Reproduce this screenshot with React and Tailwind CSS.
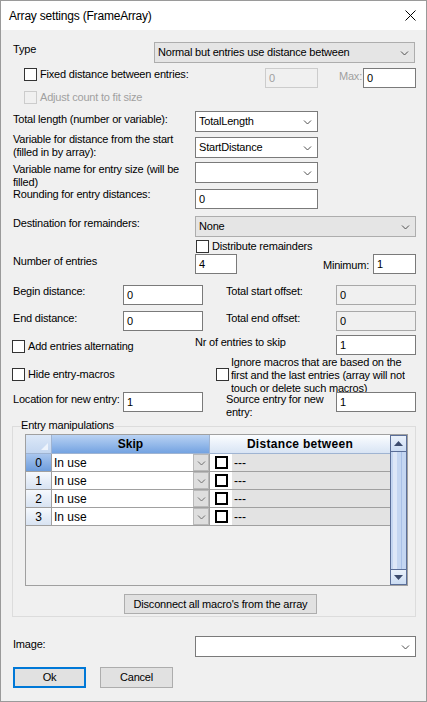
import React from "react";

const Chev = ({ className = "" }) => (
  <svg width="9" height="6" viewBox="0 0 9 6" className={className}>
    <path d="M1 1.5 L4.5 5 L8 1.5" fill="none" stroke="currentColor" strokeWidth="1" />
  </svg>
);

function Combo({ className = "", value = "", gray = false }) {
  return (
    <div
      className={`${className} h-[21px] shrink-0 flex items-center border pl-[3px] pr-[5px] ${
        gray ? "bg-[#e5e5e5] border-[#adadad]" : "bg-white border-[#7a7a7a]"
      }`}
    >
      <span className="flex-1 whitespace-nowrap overflow-hidden">{value}</span>
      <Chev className="text-[#505050]" />
    </div>
  );
}

function TB({ className = "", value = "", variant = "normal" }) {
  const v =
    variant === "disabled"
      ? "bg-[#f0f0f0] border-[#cccccc] text-[#a0a0a0]"
      : variant === "readonly"
      ? "bg-[#f0f0f0] border-[#a8a8a8]"
      : "bg-white border-[#7a7a7a]";
  return (
    <div className={`${className} h-[20px] shrink-0 flex items-center border pl-[3px] ${v}`}>
      {value}
    </div>
  );
}

const CB = ({ disabled = false }) => (
  <span
    className={`block w-[13px] h-[13px] border shrink-0 ${
      disabled ? "border-[#cccccc] bg-[#f0f0f0]" : "border-[#333333] bg-white"
    }`}
  />
);

const Row = ({ className = "", children }) => (
  <div className={`flex items-start shrink-0 ${className}`}>{children}</div>
);

function Grid() {
  return (
    <div className="mt-[7px] ml-[12px] w-[383px] h-[152px] border border-[#a0a0a0] flex bg-[#f0f0f0] font-['Liberation_Sans',Arial,sans-serif] text-[12px] leading-[14px] tracking-normal">
      <div className="w-[364px] flex flex-col">
        <div className="flex h-[19px] border-b border-[#9fb4d2]">
          <div className="w-[26px] border-r border-[#9fb4d2] bg-linear-to-b from-[#dce8f8] to-[#c3d6f0] flex items-end justify-end pr-[3px] pb-[3px]">
            <svg width="7" height="7" viewBox="0 0 7 7">
              <path d="M7 0 L7 7 L0 7 Z" fill="#eef4fc" />
            </svg>
          </div>
          <div className="w-[158px] border-r border-[#9fb4d2] bg-linear-to-b from-[#b9d2f3] to-[#74a3e1] flex items-center justify-center font-bold">
            Skip
          </div>
          <div className="w-[180px] bg-linear-to-b from-[#fbfdff] to-[#d8e4f4] flex items-center justify-center font-bold tracking-[0.3px]">
            Distance between
          </div>
        </div>
        {[0, 1, 2, 3].map((i) => (
          <div key={i} className="flex h-[18px] border-b border-[#a0a0a0]">
            <div
              className={`w-[26px] border-r border-[#a0a0a0] flex items-center justify-center ${
                i === 0
                  ? "bg-linear-to-b from-[#a9c6ee] to-[#6e9ddc]"
                  : "bg-linear-to-b from-[#f6f9fd] to-[#d8e3f2]"
              }`}
            >
              {i}
            </div>
            <div className="w-[158px] border-r border-[#a0a0a0] bg-white flex items-center pl-[2px]">
              <span className="flex-1">In use</span>
              <div className="w-[16px] h-full bg-[#dedede] border border-[#b9b9b9] flex items-center justify-center text-[#707070]">
                <Chev />
              </div>
            </div>
            <div className="w-[22px] bg-white flex items-center justify-center">
              <span className="block w-[13px] h-[13px] border-2 border-black" />
            </div>
            <div className="w-[158px] bg-[#e3e3e3] pl-[2px] flex items-center">---</div>
          </div>
        ))}
      </div>
      <div className="w-[17px] flex flex-col">
        <div className="h-[17px] border border-[#5a6e98] bg-linear-to-b from-[#eaf1fb] to-[#cbdcf3] flex items-center justify-center">
          <svg width="9" height="5" viewBox="0 0 9 5">
            <path d="M0 5 L4.5 0 L9 5 Z" fill="#3b4b6e" />
          </svg>
        </div>
        <div className="flex-1 border-x border-[#5a6e98] bg-[#c4d6f1] flex">
          <div className="ml-[2px] w-[4px] bg-[#dde7f7]" />
          <div className="ml-[4px] w-[1px] bg-[#a9c0e6]" />
        </div>
        <div className="h-[16px] border border-[#5a6e98] bg-linear-to-b from-[#eaf1fb] to-[#cbdcf3] flex items-center justify-center">
          <svg width="9" height="5" viewBox="0 0 9 5">
            <path d="M0 0 L4.5 5 L9 0 Z" fill="#3b4b6e" />
          </svg>
        </div>
      </div>
    </div>
  );
}

export default function App() {
  return (
    <div className="w-[427px] h-[702px] border border-[#9a9a9a] bg-[#f0f0f0] flex flex-col overflow-hidden text-black text-[11px] leading-[13px] tracking-[-0.2px] font-['Liberation_Sans',Arial,sans-serif]">
      {/* title bar */}
      <div className="h-[29px] shrink-0 bg-white flex items-center">
        <span className="ml-[8px] text-[12px] leading-[16px] tracking-[-0.2px]">Array settings (FrameArray)</span>
        <svg className="ml-auto mr-[10px]" width="11" height="11" viewBox="0 0 11 11">
          <path d="M0.5 0.5 L10.5 10.5 M10.5 0.5 L0.5 10.5" stroke="#000" strokeWidth="1" />
        </svg>
      </div>

      {/* Type */}
      <Row className="h-[21px] mt-[12px]">
        <div className="ml-[12px] w-[141px] pt-[1px]">Type</div>
        <Combo gray className="w-[261px]" value="Normal but entries use distance between" />
      </Row>

      {/* Fixed distance */}
      <Row className="h-[21px] mt-[5px]">
        <div className="ml-[23px] w-[241px] flex items-center h-[13px]">
          <CB />
          <span className="ml-[3px] whitespace-nowrap">Fixed distance between entries:</span>
        </div>
        <TB className="w-[53px]" value="0" variant="disabled" />
        <div className="w-[45px] text-right pr-[1px] pt-[2px] text-[#a0a0a0]">Max:</div>
        <TB className="w-[53px]" value="0" />
      </Row>

      {/* Adjust count */}
      <Row className="h-[13px] mt-[2px]">
        <div className="ml-[23px] flex items-center h-[13px]">
          <CB disabled />
          <span className="ml-[3px] whitespace-nowrap text-[#a0a0a0]">Adjust count to fit size</span>
        </div>
      </Row>

      {/* Total length */}
      <Row className="h-[21px] mt-[7px]">
        <div className="ml-[12px] w-[182px] pt-[2px] whitespace-nowrap">Total length (number or variable):</div>
        <Combo className="w-[123px]" value="TotalLength" />
      </Row>

      {/* Variable for distance */}
      <Row className="h-[21px] mt-[5px]">
        <div className="ml-[12px] w-[182px] -mt-[4px] whitespace-nowrap">
          Variable for distance from the start
          <br />
          (filled in by array):
        </div>
        <Combo className="w-[123px]" value="StartDistance" />
      </Row>

      {/* Variable name */}
      <Row className="h-[21px] mt-[4px]">
        <div className="ml-[12px] w-[182px] pt-[1px] whitespace-nowrap">
          Variable name for entry size (will be
          <br />
          filled)
        </div>
        <Combo className="w-[123px]" value="" />
      </Row>

      {/* Rounding */}
      <Row className="h-[20px] mt-[6px]">
        <div className="ml-[12px] w-[182px] -mt-[1px] whitespace-nowrap">Rounding for entry distances:</div>
        <TB className="w-[123px]" value="0" />
      </Row>

      {/* Destination */}
      <Row className="h-[21px] mt-[7px]">
        <div className="ml-[12px] w-[182px] pt-[1px] whitespace-nowrap">Destination for remainders:</div>
        <Combo gray className="w-[221px]" value="None" />
      </Row>

      {/* Distribute */}
      <Row className="h-[13px] mt-[3px]">
        <div className="ml-[195px] flex items-center h-[13px]">
          <CB />
          <span className="ml-[3px] whitespace-nowrap">Distribute remainders</span>
        </div>
      </Row>

      {/* Number of entries */}
      <Row className="h-[20px] mt-[1px]">
        <div className="ml-[12px] w-[182px] pt-[1px] whitespace-nowrap">Number of entries</div>
        <TB className="w-[42px]" value="4" />
        <div className="w-[136px] text-right pr-[4px] pt-[5px]">Minimum:</div>
        <TB className="w-[43px]" value="1" />
      </Row>

      {/* Begin distance */}
      <Row className="h-[20px] mt-[11px]">
        <div className="ml-[12px] w-[110px] whitespace-nowrap">Begin distance:</div>
        <TB className="w-[80px]" value="0" />
        <div className="ml-[23px] w-[110px] whitespace-nowrap">Total start offset:</div>
        <TB className="w-[80px]" value="0" variant="readonly" />
      </Row>

      {/* End distance */}
      <Row className="h-[20px] mt-[6px]">
        <div className="ml-[12px] w-[110px] pt-[1px] whitespace-nowrap">End distance:</div>
        <TB className="w-[80px]" value="0" />
        <div className="ml-[23px] w-[110px] pt-[1px] whitespace-nowrap">Total end offset:</div>
        <TB className="w-[80px]" value="0" variant="readonly" />
      </Row>

      {/* Add entries alternating */}
      <Row className="h-[20px] mt-[4px]">
        <div className="ml-[11px] w-[183px] flex items-center h-[13px] mt-[5px]">
          <CB />
          <span className="ml-[3px] whitespace-nowrap">Add entries alternating</span>
        </div>
        <div className="w-[141px] pt-[1px] whitespace-nowrap">Nr of entries to skip</div>
        <TB className="w-[80px]" value="1" />
      </Row>

      {/* Hide / Ignore */}
      <Row className="h-[36px] mt-[1px]">
        <div className="ml-[11px] w-[204px] flex items-center h-[13px] mt-[12px]">
          <CB />
          <span className="ml-[3px] whitespace-nowrap">Hide entry-macros</span>
        </div>
        <div className="mt-[12px]">
          <CB />
        </div>
        <div className="ml-[2px] h-[36px] overflow-hidden whitespace-nowrap">
          Ignore macros that are based on the
          <br />
          first and the last entries (array will not
          <br />
          touch or delete such macros)
        </div>
      </Row>

      {/* Location / Source */}
      <Row className="h-[20px] mt-[0px]">
        <div className="ml-[12px] w-[110px] pt-[1px] whitespace-nowrap">Location for new entry:</div>
        <TB className="w-[80px]" value="1" />
        <div className="ml-[23px] w-[110px] pt-[1px] whitespace-nowrap">
          Source entry for new
          <br />
          entry:
        </div>
        <TB className="w-[80px]" value="1" />
      </Row>

      {/* Group box */}
      <div className="relative shrink-0 mt-[14px] ml-[11px] w-[404px] h-[191px] border border-[#dcdcdc] flex flex-col">
        <span className="absolute left-[8px] -top-[8px] bg-[#f0f0f0] pr-[1px] whitespace-nowrap">
          Entry manipulations
        </span>
        <Grid />
        <div className="mt-[8px] ml-[111px] w-[193px] h-[20px] border border-[#adadad] bg-[#e1e1e1] flex items-center justify-center whitespace-nowrap">
          Disconnect all macro's from the array
        </div>
      </div>

      {/* Image */}
      <Row className="h-[21px] mt-[19px]">
        <div className="ml-[12px] w-[182px] pt-[2px]">Image:</div>
        <Combo className="w-[221px]" value="" />
      </Row>

      {/* Buttons */}
      <Row className="h-[21px] mt-[10px]">
        <div className="ml-[12px] w-[73px] h-[21px] border-2 border-[#0078d7] bg-[#e1e1e1] flex items-center justify-center">
          Ok
        </div>
        <div className="ml-[14px] w-[73px] h-[21px] border border-[#adadad] bg-[#e1e1e1] flex items-center justify-center">
          Cancel
        </div>
      </Row>
    </div>
  );
}
